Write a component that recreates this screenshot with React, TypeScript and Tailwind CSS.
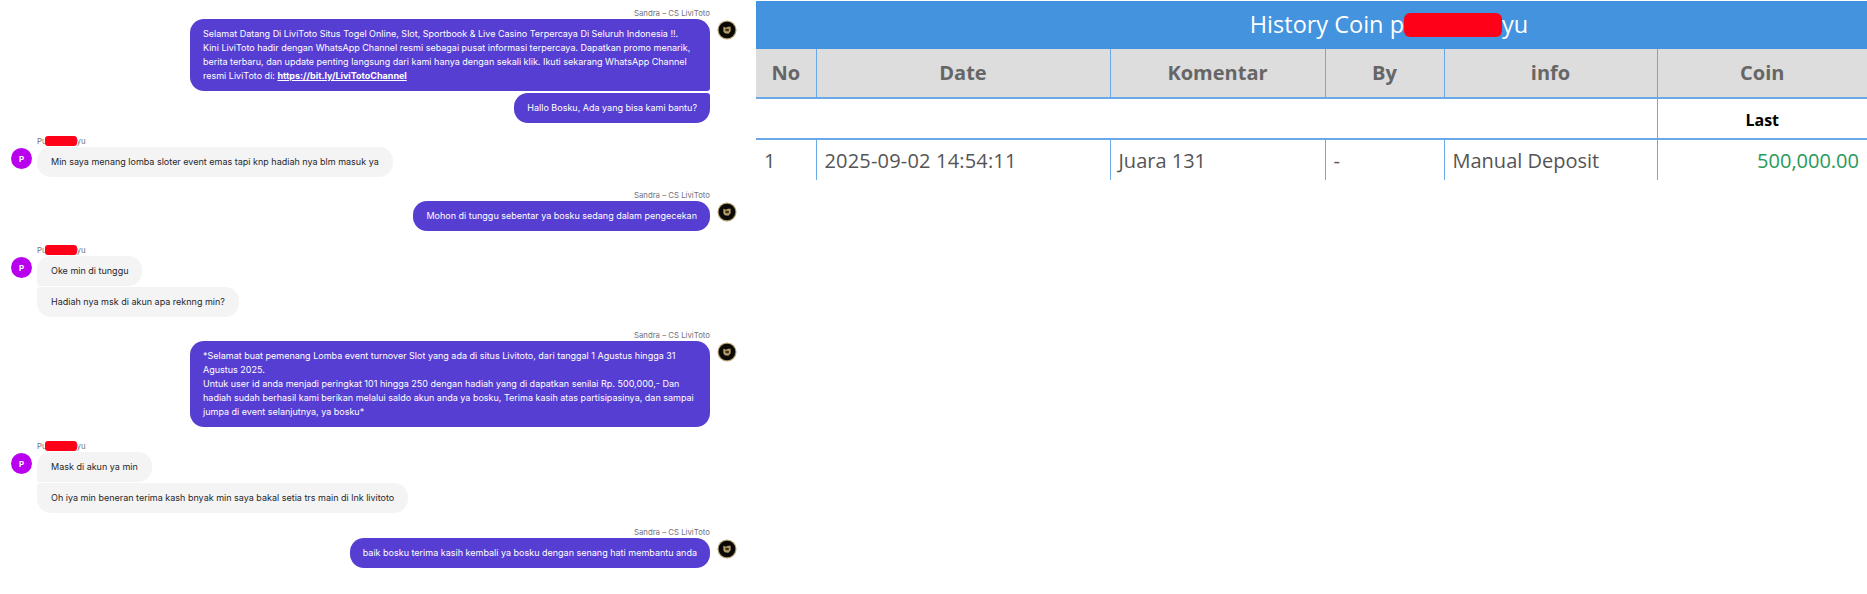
import React from "react";

function AgentLogo() {
  return (
    <svg width="20" height="20" viewBox="0 0 22 22" className="shrink-0">
      <circle cx="11" cy="11" r="10.5" fill="#b5a478" />
      <circle cx="11" cy="11" r="9.2" fill="#0b0906" />
      <path d="M7 7.5 L10 8.5 L12 7.5 L15 7.5 L15 12.5 L12.5 15 L8.5 14.5 L7 12.5 Z" fill="#b9a06a" />
      <path d="M9 9.5 L13 9.5 L13 12.5 L9.5 12.5 Z" fill="#3a2f18" />
    </svg>
  );
}

function Redacted({ className }: { className: string }) {
  return <span className={`inline-block bg-[#ff0019] align-middle ${className}`} />;
}

function AgentLabel({ className = "" }: { className?: string }) {
  return (
    <div className={`h-3 pr-[46px] text-right text-[7.8px] leading-3 text-[#71717a] ${className}`}>
      Sandra – CS LiviToto
    </div>
  );
}

function CustomerLabel({ className = "" }: { className?: string }) {
  return (
    <div className={`flex h-3 items-center pl-[37px] text-[7.8px] leading-3 text-[#71717a] ${className}`}>
      <span>Pu</span>
      <Redacted className="-ml-[2px] h-[10px] w-[32px] rounded-[3px]" />
      <span>yu</span>
    </div>
  );
}

function AgentRow({
  children,
  logo = true,
  corners = "rounded-[14px]",
  className = "",
}: {
  children: React.ReactNode;
  logo?: boolean;
  corners?: string;
  className?: string;
}) {
  return (
    <div className={`flex items-start justify-end pr-[19px] ${className}`}>
      <div className={`whitespace-nowrap bg-[#573ed2] px-[13px] py-2 text-[9px] leading-[14px] text-white ${corners}`}>
        {children}
      </div>
      <div className="ml-[7px] w-[20px] pt-px">{logo && <AgentLogo />}</div>
    </div>
  );
}

function CustomerRow({
  children,
  avatar = true,
  corners = "rounded-[14px]",
  className = "",
}: {
  children: React.ReactNode;
  avatar?: boolean;
  corners?: string;
  className?: string;
}) {
  return (
    <div className={`flex items-start pl-[11px] ${className}`}>
      <div className="w-[26px] pt-px">
        {avatar && (
          <div className="flex h-[21px] w-[21px] items-center justify-center rounded-full bg-[#b900ee] text-[8px] font-bold text-white">
            P
          </div>
        )}
      </div>
      <div className={`whitespace-nowrap bg-[#f4f4f5] px-[14px] py-2 text-[9px] leading-[14px] text-[#27272a] ${corners}`}>
        {children}
      </div>
    </div>
  );
}

function Chat() {
  return (
    <div className="w-[756px] shrink-0 pt-[7px]">
      <AgentLabel />
      <AgentRow corners="w-[520px] rounded-[14px] rounded-br-[3px]">
        Selamat Datang Di LiviToto Situs Togel Online, Slot, Sportbook &amp; Live Casino Terpercaya Di Seluruh Indonesia !!.
        <br />
        Kini LiviToto hadir dengan WhatsApp Channel resmi sebagai pusat informasi terpercaya. Dapatkan promo menarik,
        <br />
        berita terbaru, dan update penting langsung dari kami hanya dengan sekali klik. Ikuti sekarang WhatsApp Channel
        <br />
        resmi LiviToto di: <a className="font-bold underline">https://bit.ly/LiviTotoChannel</a>
      </AgentRow>
      <AgentRow logo={false} corners="rounded-[14px] rounded-tr-[3px]" className="mt-[2px]">
        Hallo Bosku, Ada yang bisa kami bantu?
      </AgentRow>

      <CustomerLabel className="mt-3" />
      <CustomerRow>Min saya menang lomba sloter event emas tapi knp hadiah nya blm masuk ya</CustomerRow>

      <AgentLabel className="mt-3" />
      <AgentRow>Mohon di tunggu sebentar ya bosku sedang dalam pengecekan</AgentRow>

      <CustomerLabel className="mt-[13px]" />
      <CustomerRow corners="rounded-[14px] rounded-bl-[3px]">Oke min di tunggu</CustomerRow>
      <CustomerRow avatar={false} corners="rounded-[14px] rounded-tl-[3px]" className="mt-px">
        Hadiah nya msk di akun apa reknng min?
      </CustomerRow>

      <AgentLabel className="mt-3" />
      <AgentRow corners="w-[520px] rounded-[14px]">
        *Selamat buat pemenang Lomba event turnover Slot yang ada di situs Livitoto, dari tanggal 1 Agustus hingga 31
        <br />
        Agustus 2025.
        <br />
        Untuk user id anda menjadi peringkat 101 hingga 250 dengan hadiah yang di dapatkan senilai Rp. 500,000,- Dan
        <br />
        hadiah sudah berhasil kami berikan melalui saldo akun anda ya bosku, Terima kasih atas partisipasinya, dan sampai
        <br />
        jumpa di event selanjutnya, ya bosku*
      </AgentRow>

      <CustomerLabel className="mt-[13px]" />
      <CustomerRow corners="rounded-[14px] rounded-bl-[3px]">Mask di akun ya min</CustomerRow>
      <CustomerRow avatar={false} corners="rounded-[14px] rounded-tl-[3px]" className="mt-px">
        Oh iya min beneran terima kash bnyak min saya bakal setia trs main di lnk livitoto
      </CustomerRow>

      <AgentLabel className="mt-[13px]" />
      <AgentRow>baik bosku terima kasih kembali ya bosku dengan senang hati membantu anda</AgentRow>
    </div>
  );
}

function History() {
  const th = "border-l border-[#6aa8e8] bg-[#dddddd] text-center text-[20px] font-bold text-[#666666]";
  const td = "border-l border-[#6aa8e8] px-[8px] pt-px text-[20px] font-normal text-[#555555]";
  return (
    <div className="mt-px min-w-0 flex-1 font-['Open_Sans',sans-serif]">
      <div className="flex h-12 items-center justify-center bg-[#4393de] pl-[155px] text-[23.5px] text-white">
        History Coin p
        <Redacted className="h-6 w-[98px] rounded-md" />
        yu
      </div>
      <table className="w-full table-fixed border-collapse">
        <colgroup>
          <col className="w-[60px]" />
          <col className="w-[294px]" />
          <col className="w-[215px]" />
          <col className="w-[119px]" />
          <col className="w-[213px]" />
          <col />
        </colgroup>
        <thead>
          <tr className="h-[49px] border-b-2 border-[#6aa8e8]">
            <th className={`${th} border-l-0`}>No</th>
            <th className={th}>Date</th>
            <th className={th}>Komentar</th>
            <th className={th}>By</th>
            <th className={th}>info</th>
            <th className={th}>Coin</th>
          </tr>
        </thead>
        <tbody>
          <tr className="h-[41px] border-b-2 border-[#6aa8e8]">
            <td colSpan={5} />
            <td className="border-l border-[#6aa8e8] pt-[3px] text-center text-[16px] font-bold text-black">Last</td>
          </tr>
          <tr className="h-[41px]">
            <td className={`${td} border-l-0`}>1</td>
            <td className={`${td} tracking-[0.18px]`}>2025-09-02 14:54:11</td>
            <td className={td}>Juara 131</td>
            <td className={td}>-</td>
            <td className={td}>Manual Deposit</td>
            <td className="border-l border-[#6aa8e8] px-[8px] pt-px text-right text-[20px] text-[#279a5b]">500,000.00</td>
          </tr>
        </tbody>
      </table>
    </div>
  );
}

export default function App() {
  return (
    <div className="flex h-[594px] w-[1867px] overflow-hidden bg-white font-['Inter',sans-serif]">
      <Chat />
      <History />
    </div>
  );
}
